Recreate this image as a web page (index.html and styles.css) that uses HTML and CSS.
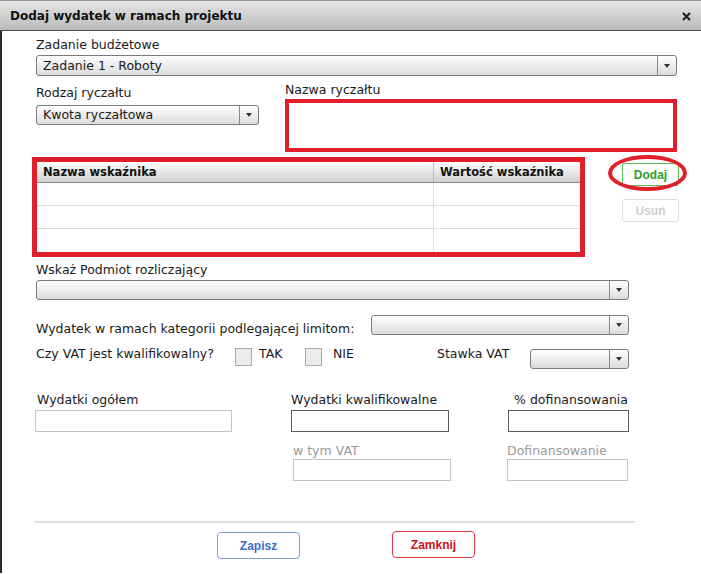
FILE: index.html
```html
<!DOCTYPE html>
<html lang="pl">
<head>
<meta charset="utf-8">
<title>Dodaj wydatek w ramach projektu</title>
<link rel="stylesheet" href="styles.css">
</head>
<body>
<div class="dialog">
  <div class="titlebar">
    <span class="title">Dodaj wydatek w ramach projektu</span>
    <svg class="close" width="9" height="9" viewBox="0 0 9 9"><path d="M1 1 L8 8 M8 1 L1 8" stroke="#222" stroke-width="2.2" fill="none"/></svg>
  </div>
  <div class="content">
    <div class="label lbl-zadanie">Zadanie budżetowe</div>
    <div class="select sel-zadanie"><span class="val">Zadanie 1 - Roboty</span><span class="arrow"></span></div>

    <div class="row2">
      <div class="col-rodzaj">
        <div class="label lbl-rodzaj">Rodzaj ryczałtu</div>
        <div class="select sel-rodzaj"><span class="val">Kwota ryczałtowa</span><span class="arrow"></span></div>
      </div>
      <div class="col-nazwa">
        <div class="label lbl-nazwa">Nazwa ryczałtu</div>
        <div class="redbox nazwa-box"></div>
      </div>
    </div>

    <div class="row3">
      <div class="redbox table-box">
        <table class="grid">
          <thead>
            <tr><th class="c1">Nazwa wskaźnika</th><th class="c2">Wartość wskaźnika</th></tr>
          </thead>
          <tbody>
            <tr><td></td><td></td></tr>
            <tr><td></td><td></td></tr>
            <tr class="last"><td></td><td></td></tr>
          </tbody>
        </table>
      </div>
      <div class="side">
        <div class="dodaj-wrap">
          <button class="btn dodaj">Dodaj</button>
          <span class="ellipse"></span>
        </div>
        <button class="btn usun">Usuń</button>
      </div>
    </div>

    <div class="label lbl-wskaz">Wskaż Podmiot rozliczający</div>
    <div class="select sel-wskaz"><span class="val"></span><span class="arrow"></span></div>

    <div class="row5">
      <div class="label lbl-wydatek">Wydatek w ramach kategorii podlegającej limitom:</div>
      <div class="select sel-limit"><span class="val"></span><span class="arrow"></span></div>
    </div>

    <div class="row6">
      <div class="label vat-q">Czy VAT jest kwalifikowalny?</div>
      <span class="check"></span>
      <div class="label tak">TAK</div>
      <span class="check"></span>
      <div class="label nie">NIE</div>
      <div class="label stawka">Stawka VAT</div>
      <div class="select sel-stawka"><span class="val"></span><span class="arrow"></span></div>
    </div>

    <div class="row7">
      <div class="col col-a">
        <div class="label lbl-a">Wydatki ogółem</div>
        <div class="input light w-a"></div>
      </div>
      <div class="col col-b">
        <div class="label">Wydatki kwalifikowalne</div>
        <div class="input dark w-b"></div>
        <div class="label sub sub-b">w tym VAT</div>
        <div class="input light w-b2"></div>
      </div>
      <div class="col col-c">
        <div class="label right">% dofinansowania</div>
        <div class="input dark w-c"></div>
        <div class="label sub sub-c">Dofinansowanie</div>
        <div class="input light w-c2"></div>
      </div>
    </div>

    <div class="hr"></div>

    <div class="row9">
      <button class="btn big zapisz">Zapisz</button>
      <button class="btn big zamknij">Zamknij</button>
    </div>
  </div>
</div>
</body>
</html>
```

FILE: styles.css
```css
html, body {
  margin: 0;
  padding: 0;
  background: #fff;
  overflow: hidden;
}

.dialog {
  width: 701px;
  height: 574px;
  font-family: "DejaVu Sans", Verdana, sans-serif;
  font-size: 12.5px;
  color: #1a1a1a;
}

.titlebar {
  height: 31px;
  border-bottom: 1px solid #4a4a4a;
  background: linear-gradient(#e4e4e4, #bcbcbc);
  display: flex;
  align-items: center;
  justify-content: space-between;
  box-sizing: border-box;
  border-top: 1px solid #9a9a9a;
}

.title {
  font-weight: bold;
  font-size: 12px;
  margin-left: 10px;
  margin-top: 1px;
  color: #111;
}

.close {
  margin-right: 10px;
  margin-top: 1px;
}

.content {
  height: 542px;
  border-left: 2px solid #2b2b2b;
  padding-left: 34px;
  box-sizing: border-box;
}

.label {
  line-height: 16px;
  white-space: nowrap;
}

.lbl-zadanie { padding-top: 6px; }

.select {
  display: flex;
  box-sizing: border-box;
  height: 21px;
  border: 1px solid #7a7a7a;
  border-radius: 3px;
  background: linear-gradient(#ffffff, #dcdcdc);
}

.select .val {
  flex: 1;
  padding-left: 6px;
  line-height: 19px;
  white-space: nowrap;
}

.select .arrow {
  width: 18px;
  border-left: 1px solid #8a8a8a;
  position: relative;
}

.select .arrow::after {
  content: "";
  position: absolute;
  left: 6px;
  top: 8px;
  border-left: 3px solid transparent;
  border-right: 3px solid transparent;
  border-top: 4px solid #333;
}

.sel-zadanie { margin-top: 2px; width: 641px; }

.row2 { display: flex; }

.col-rodzaj { width: 249px; }
.lbl-rodzaj { margin-top: 9px; }
.sel-rodzaj { margin-top: 4px; width: 223px; height: 20px; }
.sel-rodzaj .val { line-height: 18px; }
.sel-rodzaj .arrow::after { top: 7px; }

.lbl-nazwa { margin-top: 6px; }

.redbox {
  box-sizing: border-box;
  border-style: solid;
  border-color: #e01f2a;
}

.nazwa-box {
  margin-top: 1px;
  width: 392px;
  height: 53px;
  border-width: 4px;
}

.row3 {
  display: flex;
  margin-top: 5px;
  margin-left: -4px;
}

.table-box {
  width: 553px;
  height: 100px;
  border-width: 5px;
}

.grid {
  width: 543px;
  border-collapse: collapse;
  table-layout: fixed;
}

.grid th {
  height: 20px;
  padding: 0 0 0 6px;
  text-align: left;
  font-size: 11.5px;
  font-weight: bold;
  background: linear-gradient(#ffffff, #cfcfcf);
  border-bottom: 1px solid #8a8a8a;
  color: #111;
}

.grid th.c1 { width: 390px; }
.grid th.c2 { border-left: 1px solid #bcbcbc; }

.grid td {
  height: 22px;
  padding: 0;
  border-bottom: 1px solid #dedede;
}

.grid td + td { border-left: 1px solid #dedede; }
.grid tr.last td { border-bottom: none; height: 23px; }

.side {
  margin-left: 37px;
  padding-top: 6px;
  display: flex;
  flex-direction: column;
}

.btn {
  font-family: "Liberation Sans", Arial, sans-serif;
  font-weight: bold;
  font-size: 12px;
  background: #fff;
  box-sizing: border-box;
  border-radius: 3px;
  padding: 0;
  cursor: pointer;
}

.dodaj-wrap { position: relative; width: 57px; height: 23px; }

.dodaj {
  width: 57px;
  height: 23px;
  color: #2f9e2f;
  border: 1px solid #5bbd5b;
  border-radius: 2px;
}

.ellipse {
  position: absolute;
  left: -14px;
  top: -8px;
  width: 79px;
  height: 36px;
  box-sizing: border-box;
  border: 4px solid #e01f2a;
  border-radius: 50%;
  pointer-events: none;
}

.usun {
  margin-top: 13px;
  width: 57px;
  height: 23px;
  color: #cfcfcf;
  border: 1px solid #dcdcdc;
}

.lbl-wskaz { margin-top: 5px; }
.sel-wskaz { margin-top: 2px; width: 593px; height: 20px; }
.sel-wskaz .arrow::after { top: 7px; }

.row5 {
  display: flex;
  align-items: flex-start;
  margin-top: 15px;
}

.lbl-wydatek { margin-top: 6px; width: 335px; }
.sel-limit { width: 258px; height: 20px; }
.sel-limit .arrow::after { top: 7px; }

.row6 {
  display: flex;
  align-items: flex-start;
  margin-top: 9px;
}

.vat-q { width: 199px; }

.check {
  box-sizing: border-box;
  width: 17px;
  height: 18px;
  margin-top: 2px;
  border: 1px solid #a8a8a8;
  background: #ececec;
}

.tak { width: 46px; margin-left: 7px; }
.nie { width: 104px; margin-left: 11px; }
.stawka { width: 93px; }
.sel-stawka { width: 99px; height: 20px; margin-top: 3px; }
.sel-stawka .arrow::after { top: 7px; }

.row7 {
  display: flex;
  margin-top: 23px;
  margin-left: -1px;
}

.col { display: flex; flex-direction: column; }
.col-a { width: 197px; }
.lbl-a { padding-left: 2px; }
.col-b { width: 160px; margin-left: 59px; }
.col-c { width: 122px; margin-left: 56px; }

.right { text-align: right; padding-right: 1px; }

.input {
  box-sizing: border-box;
  height: 22px;
  margin-top: 2px;
  background: #fff;
}

.input.light { border: 1px solid #c4c4c4; }
.input.dark { border: 1px solid #5c5c5c; }

.w-a { width: 197px; }
.w-b { width: 158px; }
.w-b2 { width: 158px; margin-left: 2px; margin-top: 0; }
.w-c { width: 121px; margin-left: 1px; }
.w-c2 { width: 121px; margin-top: 0; }

.sub { color: #9a9a9a; margin-top: 11px; }
.sub-b { padding-left: 2px; }

.hr {
  margin-top: 40px;
  margin-left: -1px;
  width: 600px;
  height: 2px;
  background: #dcdcdc;
}

.row9 {
  display: flex;
  align-items: flex-start;
  margin-top: 8px;
}

.big {
  width: 83px;
  height: 27px;
  border-radius: 4px;
}

.zapisz {
  margin-left: 181px;
  margin-top: 1px;
  color: #3a6cc8;
  border: 1px solid #7f9fd8;
}

.zamknij {
  margin-left: 92px;
  color: #cc1020;
  border: 1px solid #d83a3a;
}
```
